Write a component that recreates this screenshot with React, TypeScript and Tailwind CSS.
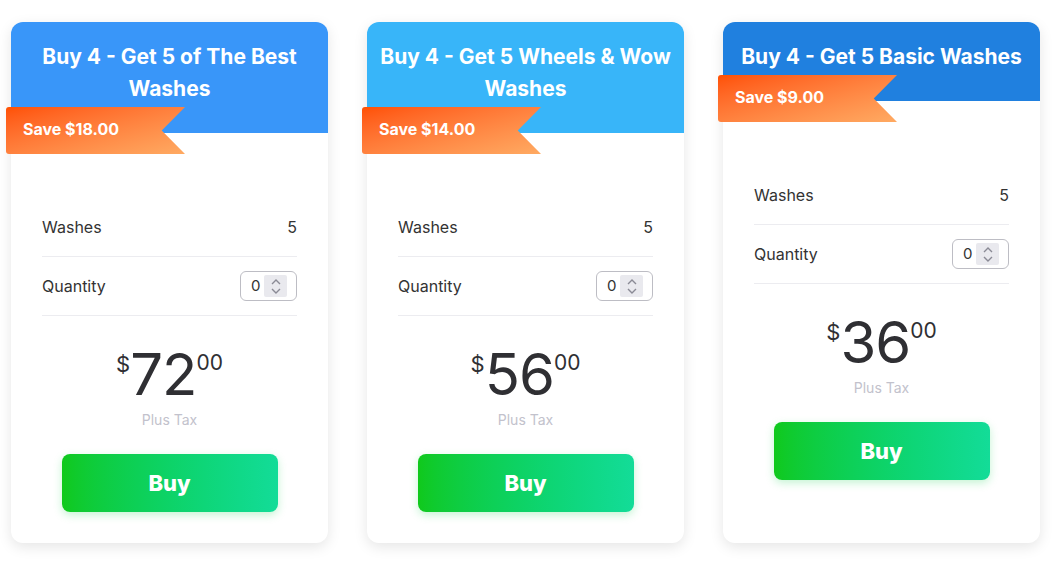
import React, { useState } from 'react';

interface Plan {
  title: string;
  save: string;
  washes: number;
  dollars: string;
  cents: string;
  header: string;
}

const plans: Plan[] = [
  { title: 'Buy 4 - Get 5 of The Best Washes', save: 'Save $18.00', washes: 5, dollars: '72', cents: '00', header: 'bg-[#3996f9]' },
  { title: 'Buy 4 - Get 5 Wheels & Wow Washes', save: 'Save $14.00', washes: 5, dollars: '56', cents: '00', header: 'bg-[#38b5f9]' },
  { title: 'Buy 4 - Get 5 Basic Washes', save: 'Save $9.00', washes: 5, dollars: '36', cents: '00', header: 'bg-[#2080df]' },
];

const Spinner: React.FC = () => (
  <div className="flex flex-col items-center justify-center w-[23px] h-[22px] bg-[#e9e9ee] rounded-[2px]">
    <svg width="10" height="6" viewBox="0 0 10 6" fill="none" stroke="#8a8a95" strokeWidth="1.4">
      <path d="M1 5 L5 1 L9 5" />
    </svg>
    <svg width="10" height="6" viewBox="0 0 10 6" fill="none" stroke="#8a8a95" strokeWidth="1.4" className="mt-[3px]">
      <path d="M1 1 L5 5 L9 1" />
    </svg>
  </div>
);

const Card: React.FC<{ plan: Plan }> = ({ plan }) => {
  const [qty] = useState(0);
  return (
    <div className="relative w-[317px] bg-white rounded-xl shadow-[0_4px_14px_rgba(0,0,0,0.10)] flex flex-col">
      {/* Header */}
      <div className={`${plan.header} rounded-t-xl px-2 pt-[19px] pb-[28px] text-center text-white font-bold text-[21px] leading-[32px]`}>
        {plan.title}
      </div>

      {/* Ribbon */}
      <div className="relative h-0">
        <div
          className="absolute left-[-5px] top-[-26px] w-[179px] h-[47px] flex items-center pl-[17px] pb-[3px] rounded-l-[3px] bg-linear-to-br from-[#ff5000] to-[#ffaa62] text-white font-bold text-[16px]"
          style={{ clipPath: 'polygon(0 0, 100% 0, 87% 50%, 100% 100%, 0 100%)' }}
        >
          {plan.save}
        </div>
      </div>

      {/* Body */}
      <div className="flex flex-col flex-1 px-[31px] pt-[65px] pb-[31px]">
        <div className="flex items-center justify-between h-[59px] border-b border-[#ececf0] text-[16px] text-[#333]">
          <span>Washes</span>
          <span>{plan.washes}</span>
        </div>
        <div className="flex items-center justify-between h-[59px] border-b border-[#ececf0] text-[16px] text-[#333]">
          <span>Quantity</span>
          <div className="flex items-center justify-between w-[57px] h-[30px] border border-[#bdbdc4] rounded-md pl-[10px] pr-[9px]">
            <span className="text-[15px]">{qty}</span>
            <Spinner />
          </div>
        </div>

        <div className="flex justify-center items-start mt-[28px] text-[#2f2f33]">
          <span className="text-[22px] leading-none mt-[9px]">$</span>
          <span className="text-[58px] leading-[60px] tracking-[-1px]">{plan.dollars}</span>
          <span className="text-[21px] leading-none mt-[8px]">{plan.cents}</span>
        </div>
        <div className="text-center text-[14px] text-[#c2c2cc] mt-[5px]">Plus Tax</div>

        <button className="mt-[24px] mx-auto w-[216px] h-[58px] rounded-lg bg-linear-to-r from-[#10c91b] to-[#13dc98] text-white font-extrabold text-[22px] shadow-[0_3px_8px_rgba(20,210,80,0.25)]">
          Buy
        </button>
      </div>
    </div>
  );
};

export default function App() {
  return (
    <div className="min-h-[564px] bg-white pl-[11px] pt-[22px] font-['Inter','Liberation_Sans',sans-serif]">
      <div className="flex items-stretch gap-[39px]">
        {plans.map((p) => (
          <Card key={p.title} plan={p} />
        ))}
      </div>
    </div>
  );
}
